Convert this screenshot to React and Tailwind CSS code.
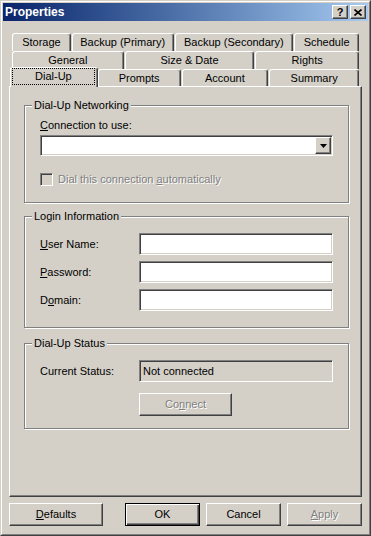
import React from 'react';

const raised =
  'border border-t-white border-l-white border-r-[#404040] border-b-[#404040] shadow-[inset_-1px_-1px_0_#808080] bg-[#d4d0c8]';
const sunken =
  'border border-t-[#808080] border-l-[#808080] border-r-white border-b-white shadow-[inset_1px_1px_0_#404040,inset_-1px_-1px_0_#d4d0c8]';
const etched = 'border border-[#808080] shadow-[inset_1px_1px_0_#fff,1px_1px_0_#fff]';
const disabledText = 'text-[#808080] [text-shadow:1px_1px_0_#fff]';

const tabRows = [
  {
    h: 'h-[18px]',
    tabs: [
      { label: 'Storage', w: 'w-[59px]' },
      { label: 'Backup (Primary)', w: 'w-[102px]' },
      { label: 'Backup (Secondary)', w: 'w-[119px]' },
      { label: 'Schedule', w: 'w-[65px]' },
    ],
  },
  {
    h: 'h-[18px]',
    tabs: [
      { label: 'General', w: 'w-[112px]' },
      { label: 'Size & Date', w: 'w-[130px]' },
      { label: 'Rights', w: 'w-[104px]' },
    ],
  },
  {
    h: 'h-[17px]',
    tabs: [
      { label: 'Dial-Up', w: 'w-[88px]', selected: true },
      { label: 'Prompts', w: 'w-[83px]' },
      { label: 'Account', w: 'w-[87px]' },
      { label: 'Summary', w: 'w-[90px]' },
    ],
  },
];

const Tab = ({ label, w, selected }) => {
  if (selected) {
    return (
      <div
        className={`${w} relative z-10 -ml-[2px] -mr-[1px] -mt-[2px] h-[20px] flex bg-[#d4d0c8] border-t border-l border-r border-t-white border-l-white border-r-[#404040] rounded-t-[3px] shadow-[inset_-1px_0_0_#808080]`}
      >
        <div className="flex-1 mt-[0px] mb-[2px] ml-[1px] mr-[2px] border border-dotted border-black flex items-center justify-center pb-[1px]">
          {label}
        </div>
      </div>
    );
  }
  return (
    <div
      className={`${w} h-full flex items-center justify-center bg-[#d4d0c8] border-t border-l border-r border-t-white border-l-white border-r-[#404040] rounded-t-[3px] shadow-[inset_-1px_0_0_#808080]`}
    >
      {label}
    </div>
  );
};

const Group = ({ title, className, children }) => (
  <fieldset className={`${etched} w-[324px] p-0 ${className}`}>
    <legend className="ml-[7px] px-[2px] leading-[13px] bg-[#d4d0c8]">{title}</legend>
    {children}
  </fieldset>
);

const Field = ({ label }) => (
  <div className="flex items-center">
    <div className="w-[99px]">{label}</div>
    <div className={`${sunken} bg-white w-[194px] h-[22px]`} />
  </div>
);

const Button = ({ children, w, disabled, isDefault }) => (
  <div
    className={`${w} h-[23px] flex items-center justify-center bg-[#d4d0c8] ${
      isDefault
        ? 'border border-black shadow-[inset_1px_1px_0_#fff,inset_-1px_-1px_0_#404040,inset_-2px_-2px_0_#808080]'
        : raised
    } ${disabled ? disabledText : ''}`}
  >
    {children}
  </div>
);

export default function App() {
  return (
    <div className="w-[371px] h-[536px] bg-[#d4d0c8] border border-t-[#d4d0c8] border-l-[#d4d0c8] border-r-[#404040] border-b-[#404040] font-['Liberation_Sans',Arial,sans-serif] text-[11px] leading-[13px] text-black select-none">
      <div className="h-full border border-t-white border-l-white border-r-[#808080] border-b-[#808080] p-[1px] flex flex-col">
        {/* title bar */}
        <div className="h-[18px] shrink-0 flex items-center bg-linear-to-r from-[#0a246a] to-[#a6caf0] pl-[2px] pr-[2px]">
          <span className="flex-1 text-white font-bold text-[12px]">Properties</span>
          <div className={`${raised} w-[16px] h-[14px] flex items-center justify-center font-bold text-[11px] leading-none`}>
            ?
          </div>
          <div className={`${raised} ml-[2px] w-[16px] h-[14px] flex items-center justify-center`}>
            <svg width="8" height="7" viewBox="0 0 8 7">
              <path d="M0.5 0.5 L7.5 6.5 M7.5 0.5 L0.5 6.5" stroke="#000" strokeWidth="1.6" />
            </svg>
          </div>
        </div>

        <div className="flex-1 px-[6px] pt-[12px] flex flex-col">
          {/* tabs */}
          <div className="px-[3px]">
            {tabRows.map((row, i) => (
              <div key={i} className={`${row.h} flex gap-[1px]`}>
                {row.tabs.map((t) => (
                  <Tab key={t.label} {...t} />
                ))}
              </div>
            ))}
          </div>

          {/* panel */}
          <div
            className={`h-[411px] border border-t-white border-l-white border-r-[#404040] border-b-[#404040] shadow-[inset_-1px_-1px_0_#808080] px-[14px] flex flex-col`}
          >
            <Group title="Dial-Up Networking" className="mt-[12px]">
              <div className="pt-[7px] pb-[16px] px-[15px]">
                <div>
                  <u>C</u>onnection to use:
                </div>
                <div className={`${sunken} bg-white mt-[3px] w-[293px] h-[21px] flex justify-end`}>
                  <div className={`${raised} w-[16px] h-[17px] mt-[1px] mr-[1px] flex items-center justify-center`}>
                    <svg width="7" height="4" viewBox="0 0 7 4">
                      <path d="M0 0 H7 L3.5 4 Z" fill="#000" />
                    </svg>
                  </div>
                </div>
                <div className="mt-[17px] flex items-center">
                  <div className={`${sunken} w-[13px] h-[13px] bg-[#d4d0c8]`} />
                  <span className={`ml-[5px] ${disabledText}`}>
                    Dial this connection <u>a</u>utomatically
                  </span>
                </div>
              </div>
            </Group>

            <Group title="Login Information" className="mt-[7px]">
              <div className="pt-[10px] pb-[16px] px-[15px] flex flex-col gap-[6px]">
                <Field label={<><u>U</u>ser Name:</>} />
                <Field label={<><u>P</u>assword:</>} />
                <Field label={<>D<u>o</u>main:</>} />
              </div>
            </Group>

            <Group title="Dial-Up Status" className="mt-[9px]">
              <div className="pt-[10px] pb-[12px] px-[15px]">
                <div className="flex items-center">
                  <div className="w-[99px]">Current Status:</div>
                  <div className={`${sunken} w-[194px] h-[22px] pl-[3px] flex items-center`}>Not connected</div>
                </div>
                <div className="mt-[11px] ml-[99px]">
                  <Button w="w-[93px]" disabled>
                    Co<u>n</u>nect
                  </Button>
                </div>
              </div>
            </Group>
          </div>

          {/* bottom buttons */}
          <div className="mt-[6px] flex">
            <Button w="w-[94px]">
              <u>D</u>efaults
            </Button>
            <div className="flex-1" />
            <div className="flex gap-[6px]">
              <Button w="w-[75px]" isDefault>
                OK
              </Button>
              <Button w="w-[75px]">Cancel</Button>
              <Button w="w-[75px]" disabled>
                <u>A</u>pply
              </Button>
            </div>
          </div>
        </div>
      </div>
    </div>
  );
}
